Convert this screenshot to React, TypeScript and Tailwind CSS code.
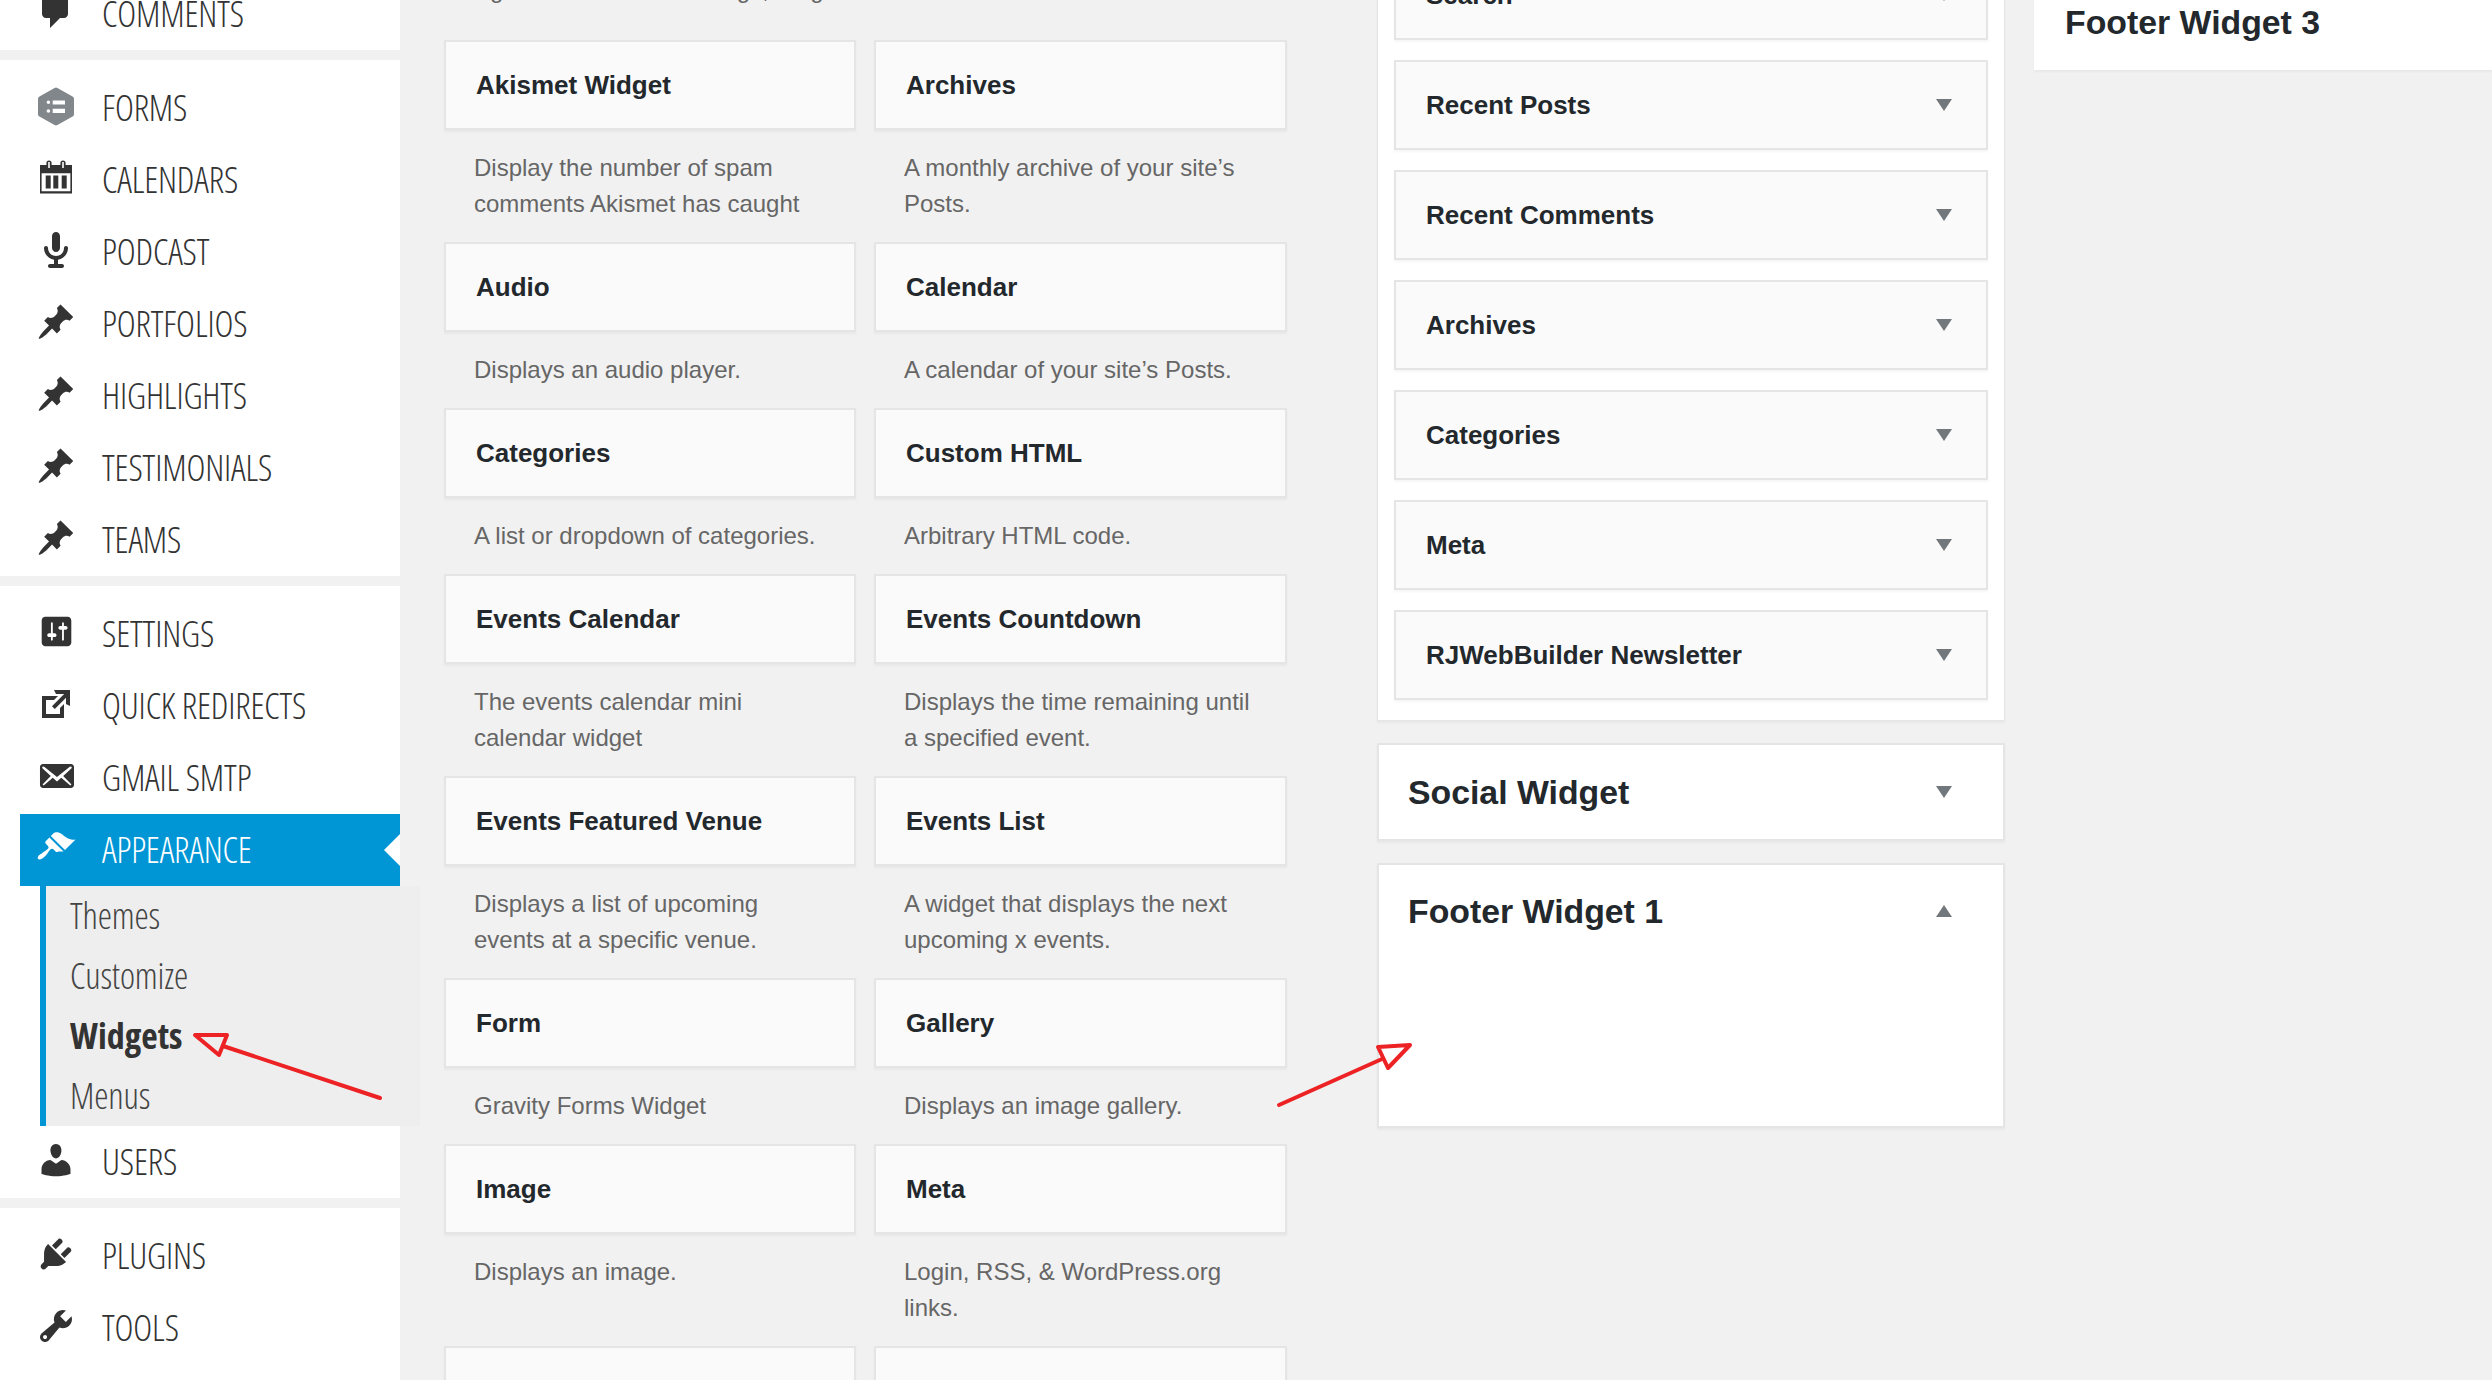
const SIDE_FONT = "font-['Open_Sans',sans-serif] font-light [font-stretch:condensed] tracking-[-0.15px]"

type IconProps = { d: string; className?: string }

function Dash({ d, className }: IconProps) {
  return (
    <svg viewBox="0 0 20 20" className={`mb-[5px] shrink-0 ${className ?? 'h-10 w-10 fill-[#333]'}`}>
      <path d={d} fillRule="evenodd" />
    </svg>
  )
}

const pin =
  'M10.44 3.02l1.82-1.82 6.36 6.35-1.83 1.82c-1.05-.68-2.48-.57-3.41.36l-.75.75c-.92.93-1.04 2.35-.35 3.41l-1.83 1.82-2.41-2.41-2.8 2.79c-.42.42-3.38 2.71-3.8 2.29s1.86-3.39 2.28-3.81l2.79-2.79L4.1 9.36l1.83-1.82c1.05.69 2.48.57 3.4-.36l.75-.75c.93-.92 1.05-2.35.36-3.41z'

const icons = {
  comments: 'M5 2h9c1.1 0 2 .9 2 2v7c0 1.1-.9 2-2 2h-2l-5 5v-5H5c-1.1 0-2-.9-2-2V4c0-1.1.9-2 2-2z',
  forms:
    'M9.300 1L1.700 5.200Q1 5.600 1 6.400v7.700q0 .8.7 1.200l7.600 4.200q.7.4 1.400 0l7.600-4.200q.7-.4.7-1.200V6.400q0-.8-.7-1.200L10.700 1q-.7-.4-1.400 0zM5.300 8.100a.9.9 0 1 0 1.800 0 .9.9 0 0 0-1.800 0zM8.350 7.250v2h6.150v-2zM5.300 12.500a.9.9 0 1 0 1.800 0 .9.9 0 0 0-1.800 0zM8.350 11.350v2.100h6.150v-2.100z',
  calendar:
    'M2 3.500H5.200V2.500a1.300 1.300 0 0 1 2.600 0V3.500H12.200V2.500a1.300 1.300 0 0 1 2.600 0V3.500H18V17.750H2ZM6.100 2h.8v3h-.8ZM13.100 2h.8v3h-.8ZM2.800 7.600V16.600H17.200V7.600ZM4.850 8.750h2.500v6.500h-2.500ZM8.650 8.750h2.500v6.500h-2.500ZM12.850 8.750h2.500v6.500h-2.500Z',
  mic: 'M12 9V3c0-1.100-.89-2-2-2-1.120 0-2 .94-2 2v6c0 1.100.9 2 2 2 1.130 0 2-.94 2-2zm4 0c0 2.970-2.160 5.430-5 5.910V17h2c.56 0 1 .45 1 1s-.44 1-1 1H7c-.55 0-1-.45-1-1s.45-1 1-1h2v-2.090C6.170 14.430 4 11.970 4 9c0-.55.45-1 1-1 .56 0 1 .45 1 1 0 2.210 1.800 4 4 4 2.230 0 4-1.770 4-4 0-.55.45-1 1-1 .56 0 1 .45 1 1z',
  settings:
    'M18 16V4c0-1.100-.9-2-2-2H4c-1.100 0-2 .9-2 2v12c0 1.100.9 2 2 2h12c1.100 0 2-.9 2-2zM8 11h1c.55 0 1 .45 1 1s-.45 1-1 1H8v1.500c0 .28-.22.5-.5.5s-.5-.22-.5-.5V13H6c-.55 0-1-.45-1-1s.45-1 1-1h1V5.500c0-.28.22-.5.5-.5s.5.22.5.5V11zm5-2h-1c-.55 0-1-.45-1-1s.45-1 1-1h1V5.500c0-.28.22-.5.5-.5s.5.22.5.5V7h1c.55 0 1 .45 1 1s-.45 1-1 1h-1v5.500c0 .28-.22.5-.5.5s-.5-.22-.5-.5V9z',
  external: 'M9 3h8v8l-2-1V6.920l-5.600 5.590-1.410-1.410L14.080 5H10zm3 12v-3l2-2v7H3V6h8L9 8H5v7h7z',
  email:
    'M19 14.500v-9c0-.83-.67-1.500-1.500-1.500H3.490c-.83 0-1.500.67-1.500 1.500v9c0 .83.67 1.500 1.500 1.500H17.500c.83 0 1.500-.67 1.500-1.500zm-1.310-9.110c.33.33.15.67-.03.84L13.600 9.950l3.900 4.060c.12.14.2.36.06.51-.13.16-.43.15-.56.05l-4.370-3.730-2.140 1.950-2.130-1.950-4.370 3.730c-.13.1-.43.11-.56-.05-.14-.15-.06-.37.06-.51l3.900-4.060-4.060-3.720c-.18-.17-.36-.51-.03-.84s.67-.17.95.07l6.240 5.040 6.250-5.040c.28-.24.62-.4.95-.07z',
  appearance:
    'M14.480 11.060L7.410 3.990l1.500-1.500c.5-.56 2.300-.47 3.510.32 1.210.8 1.430 1.280 2.910 2.100 1.180.64 2.450 1.260 4.450.85zm-.71.71L6.700 4.700 4.930 6.470c-.39.39-.39 1.020 0 1.410l1.060 1.060c.39.39.39 1.030 0 1.420-.6.6-1.430 1.110-2.210 1.690-.35.26-.7.53-1.010.84C1.430 13.230.4 14.840 1.100 15.550c.7.7 2.320-.33 3.680-1.680.31-.31.58-.66.84-1.010.58-.78 1.090-1.610 1.690-2.210.39-.39 1.020-.39 1.410 0l1.060 1.060c.39.39 1.020.39 1.410 0z',
  users:
    'M10 9.250c-2.270 0-2.730-3.440-2.730-3.440C7 4.020 7.820 2 9.970 2c2.160 0 2.980 2.020 2.710 3.810 0 0-.41 3.440-2.680 3.440zm0 2.570L12.720 10c2.390 0 4.520 2.330 4.520 4.530v2.490s-3.650 1.130-7.240 1.130c-3.650 0-7.240-1.130-7.240-1.130v-2.490c0-2.250 1.940-4.480 4.470-4.480z',
  plugins:
    'M13.110 4.360L9.870 7.600 8 5.730l3.240-3.240c.35-.34 1.050-.2 1.560.32.52.51.66 1.210.31 1.550zm-8 1.770l.91-1.120 9.010 9.010-1.190.84c-.71.71-2.630 1.160-3.820 1.160H6.140L4.900 17.260c-.59.59-1.540.59-2.120 0-.59-.58-.59-1.530 0-2.120l1.240-1.240v-3.880c0-1.130.4-3.190 1.090-3.890zm7.260 3.970l3.240-3.240c.34-.35 1.040-.21 1.550.31.52.51.66 1.210.31 1.550l-3.240 3.250z',
  tools:
    'M16.680 9.770c-1.340 1.340-3.300 1.670-4.950.99l-5.410 6.520c-.99.99-2.590.99-3.580 0s-.99-2.590 0-3.570l6.520-5.420c-.68-1.650-.35-3.610.99-4.950 1.280-1.280 3.120-1.620 4.720-1.060l-2.890 2.890 2.820 2.820 2.860-2.870c.53 1.580.18 3.390-1.080 4.650zM3.810 16.210c.4.39 1.040.39 1.430 0 .4-.4.4-1.040 0-1.430-.39-.4-1.030-.4-1.430 0-.39.39-.39 1.030 0 1.430z',
}

function MenuItem({ icon, label, iconClass, gap }: { icon: string; label: string; iconClass?: string; gap?: string }) {
  return (
    <div className="flex h-[72px] items-center pl-[36px]">
      <Dash d={icon} className={iconClass} />
      <span className={`${SIDE_FONT} ${gap ?? 'ml-[26px]'} text-[36px] leading-none text-[#333] uppercase`}>{label}</span>
    </div>
  )
}

function Sidebar() {
  return (
    <aside className="-mt-[22px] w-[400px] shrink-0">
      <div className="bg-white">
        <MenuItem icon={icons.comments} label="Comments" />
      </div>
      <div className="mt-[10px] bg-white pt-[12px]">
        <MenuItem icon={icons.forms} label="Forms" iconClass="h-10 w-10 fill-[#82878c]" />
        <MenuItem icon={icons.calendar} label="Calendars" />
        <MenuItem icon={icons.mic} label="Podcast" />
        <MenuItem icon={pin} label="Portfolios" />
        <MenuItem icon={pin} label="Highlights" />
        <MenuItem icon={pin} label="Testimonials" />
        <MenuItem icon={pin} label="Teams" />
      </div>
      <div className="mt-[10px] bg-white pt-[12px]">
        <MenuItem
          icon={icons.settings}
          label="Settings"
          iconClass="ml-[1.500px] h-[37px] w-[37px] fill-[#333]"
          gap="ml-[27.500px]"
        />
        <MenuItem icon={icons.external} label="Quick Redirects" />
        <MenuItem icon={icons.email} label="Gmail SMTP" />
        <div className="relative ml-[20px] flex h-[72px] items-center bg-[#0096d6] pl-[16px]">
          <Dash d={icons.appearance} className="h-10 w-10 fill-white" />
          <span className={`${SIDE_FONT} ml-[26px] text-[36px] leading-none text-white uppercase`}>Appearance</span>
          <div className="absolute top-[20px] right-0 border-y-[16px] border-r-[16px] border-y-transparent border-r-white" />
        </div>
        <div className="ml-[40px] w-[380px] border-l-[6px] border-[#0096d6] bg-[#eeeeee] pl-[24px] text-[#444]">
          <div className={`${SIDE_FONT} flex h-[60px] items-center text-[36px]`}>Themes</div>
          <div className={`${SIDE_FONT} flex h-[60px] items-center text-[36px]`}>Customize</div>
          <div className="flex h-[60px] items-center font-['Open_Sans',sans-serif] text-[36px] font-bold text-[#333] [font-stretch:condensed]">
            Widgets
          </div>
          <div className={`${SIDE_FONT} flex h-[60px] items-center text-[36px]`}>Menus</div>
        </div>
        <MenuItem icon={icons.users} label="Users" />
      </div>
      <div className="mt-[10px] bg-white pt-[12px] pb-[11px]">
        <MenuItem icon={icons.plugins} label="Plugins" />
        <MenuItem icon={icons.tools} label="Tools" />
        <div className="h-[40px]" />
      </div>
    </aside>
  )
}

const widgets: [string, string[]][] = [
  ['Akismet Widget', ['Display the number of spam', 'comments Akismet has caught']],
  ['Archives', ['A monthly archive of your site’s', 'Posts.']],
  ['Audio', ['Displays an audio player.']],
  ['Calendar', ['A calendar of your site’s Posts.']],
  ['Categories', ['A list or dropdown of categories.']],
  ['Custom HTML', ['Arbitrary HTML code.']],
  ['Events Calendar', ['The events calendar mini', 'calendar widget']],
  ['Events Countdown', ['Displays the time remaining until', 'a specified event.']],
  ['Events Featured Venue', ['Displays a list of upcoming', 'events at a specific venue.']],
  ['Events List', ['A widget that displays the next', 'upcoming x events.']],
  ['Form', ['Gravity Forms Widget']],
  ['Gallery', ['Displays an image gallery.']],
  ['Image', ['Displays an image.']],
  ['Meta', ['Login, RSS, & WordPress.org', 'links.']],
  ['', []],
  [' ', []],
]

function WidgetCard({ title, desc }: { title: string; desc: string[] }) {
  return (
    <div>
      <div className="flex h-[90px] items-center border-2 border-[#e5e5e5] bg-[#fafafa] pl-[30px] text-[26px] font-bold text-[#23282d] shadow-[0_2px_2px_rgba(0,0,0,0.04)]">
        {title}
      </div>
      <div className="pt-[20px] pb-[20px] pl-[30px] text-[24px] leading-[36px] text-[#666]">
        {desc.map((line) => (
          <div key={line} className="whitespace-nowrap">
            {line}
          </div>
        ))}
      </div>
    </div>
  )
}

const sidebarWidgets = ['Search', 'Recent Posts', 'Recent Comments', 'Archives', 'Categories', 'Meta', 'RJWebBuilder Newsletter']

function Caret({ up }: { up?: boolean }) {
  return up ? (
    <div className="h-0 w-0 border-x-[8px] border-b-[12px] border-x-transparent border-b-[#72777c]" />
  ) : (
    <div className="h-0 w-0 border-x-[8px] border-t-[12px] border-x-transparent border-t-[#72777c]" />
  )
}

function SidebarWidget({ title }: { title: string }) {
  return (
    <div className="flex h-[90px] items-center justify-between border-2 border-[#e5e5e5] bg-[#fafafa] pr-[34px] pl-[30px] text-[26px] font-bold text-[#23282d] shadow-[0_2px_2px_rgba(0,0,0,0.04)]">
      {title}
      <Caret />
    </div>
  )
}

function Arrows() {
  return (
    <svg className="pointer-events-none absolute inset-0 h-[1380px] w-[2492px]" viewBox="0 0 2492 1380" fill="none">
      <g stroke="#ed2224" strokeWidth="4" strokeLinecap="round" strokeLinejoin="round">
        <path d="M380 1098L223 1046" />
        <path d="M195 1035H227L219 1055Z" />
        <path d="M1279 1105L1382 1059" />
        <path d="M1378 1047L1410 1045L1388 1068Z" />
      </g>
    </svg>
  )
}

export default function App() {
  return (
    <div className="relative flex h-[1380px] w-[2492px] overflow-hidden bg-[#f1f1f1] font-['Liberation_Sans',sans-serif]">
      <Sidebar />
      <main className="ml-[44px] w-[842px] shrink-0">
        <p className="-mt-[28px] mb-[32px] pl-[10px] text-[24px] leading-[36px] whitespace-nowrap text-[#666]">
          widget and delete its settings, drag it back.
        </p>
        <div className="grid grid-cols-[412px_413px] gap-x-[18px]">
          {widgets.map(([title, desc]) => (
            <WidgetCard key={title} title={title} desc={desc} />
          ))}
        </div>
      </main>
      <section className="ml-[91px] w-[628px] shrink-0">
        <div className="-mt-[51px] border border-[#e5e5e5] bg-white px-[16px] pb-[20px] shadow-[0_2px_2px_rgba(0,0,0,0.04)]">
          <div className="flex flex-col gap-[20px]">
            {sidebarWidgets.map((title) => (
              <SidebarWidget key={title} title={title} />
            ))}
          </div>
        </div>
        <div className="mt-[22px] flex h-[98px] items-center justify-between border-2 border-[#e5e5e5] bg-white pr-[51px] pl-[29px] text-[33.800px] font-bold text-[#23282d] shadow-[0_2px_2px_rgba(0,0,0,0.04)]">
          Social Widget
          <Caret />
        </div>
        <div className="mt-[22px] h-[265px] border-2 border-[#e5e5e5] bg-white pr-[51px] pl-[29px] shadow-[0_2px_2px_rgba(0,0,0,0.04)]">
          <div className="flex h-[92px] items-center justify-between text-[33.800px] font-bold text-[#23282d]">
            Footer Widget 1
            <Caret up />
          </div>
        </div>
      </section>
      <section className="ml-[29px] h-[70px] flex-1 bg-white pl-[31px] text-[33.800px] leading-[44px] font-bold text-[#23282d] shadow-[0_2px_2px_rgba(0,0,0,0.04)]">
        Footer Widget 3
      </section>
      <Arrows />
    </div>
  )
}
